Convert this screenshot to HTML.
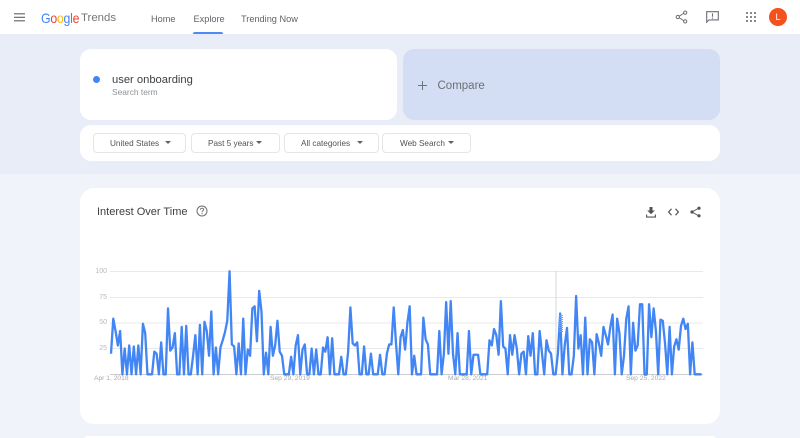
<!DOCTYPE html>
<html lang="en"><head><meta charset="utf-8"><title>Google Trends</title>
<style>
html,body{margin:0;padding:0;width:800px;height:438px;overflow:hidden;background:#f0f4fa;font-family:"Liberation Sans",sans-serif}
#wrap{position:relative;width:800px;height:438px;overflow:hidden;background:#f0f4fa;filter:blur(.3px)}
.a{position:absolute;white-space:nowrap}
#band{left:0;top:34px;width:800px;height:140px;background:#e9edf8}
#head{left:0;top:0;width:800px;height:34px;background:#fff}
.card{position:absolute;background:#fff;border-radius:11px}
.nav{top:12.5px;font-size:9.2px;line-height:12px;color:#5f6368}
.chip{position:absolute;top:133px;height:18px;border:1px solid #e3e5e8;border-radius:4px;background:#fff;font-size:8.2px;line-height:19px;color:#4f5357}
.chip span{position:absolute;top:0;white-space:nowrap}
.chip i{position:absolute;top:7px;width:0;height:0;border-left:3.2px solid transparent;border-right:3.2px solid transparent;border-top:3.6px solid #5f6368}
.y{font-size:7px;line-height:8px;color:#b8babd;text-align:right;width:20px;left:87px}
.x{font-size:6.7px;line-height:8px;color:#a9abae;top:375px}
svg{position:absolute;overflow:visible}
</style></head><body><div id="wrap">
<div class="a" id="band"></div>
<div class="a" id="head"></div>

<svg style="left:14px;top:13px" width="11" height="9" viewBox="0 0 11 9"><path d="M0 .8h11M0 4.3h11M0 7.8h11" stroke="#5f6368" stroke-width="1.1" fill="none"/></svg>
<div class="a" style="left:41px;top:8.5px;font-size:14px;line-height:18px;letter-spacing:-.3px;transform:scaleX(.88);transform-origin:0 50%"><span style="color:#4285f4">G</span><span style="color:#ea4335">o</span><span style="color:#fbbc05">o</span><span style="color:#4285f4">g</span><span style="color:#34a853">l</span><span style="color:#ea4335">e</span></div>
<div class="a" style="left:81px;top:9px;font-size:11.4px;line-height:18px;color:#757575">Trends</div>
<div class="a nav" style="left:151px">Home</div>
<div class="a nav" style="left:193.5px">Explore</div>
<div class="a nav" style="left:241px">Trending Now</div>
<div class="a" style="left:193px;top:32px;width:30px;height:2px;background:#4c8bf5;border-radius:2px 2px 0 0"></div>

<svg style="left:675px;top:10px" width="13" height="14" viewBox="0 0 13 14"><path d="M10 2.5 3 7l7 4.5" stroke="#6b6f73" stroke-width="1" fill="none"/><circle cx="10.2" cy="2.6" r="1.6" fill="#fff" stroke="#6b6f73"/><circle cx="2.8" cy="7" r="1.6" fill="#fff" stroke="#6b6f73"/><circle cx="10.2" cy="11.4" r="1.6" fill="#fff" stroke="#6b6f73"/></svg>
<svg style="left:706px;top:11px" width="13" height="12" viewBox="0 0 13 12"><path d="M.7.7h11.6v8.2H3L.7 11.2z" fill="none" stroke="#6b6f73" stroke-width="1.1"/><path d="M6.5 2.4v3.4M6.5 6.6v1.2" stroke="#6b6f73" stroke-width="1.1"/></svg>
<svg style="left:746px;top:12px" width="10" height="10" viewBox="0 0 10 10" fill="#5f6368"><circle cx="1" cy="1" r="1"/><circle cx="5" cy="1" r="1"/><circle cx="9" cy="1" r="1"/><circle cx="1" cy="5" r="1"/><circle cx="5" cy="5" r="1"/><circle cx="9" cy="5" r="1"/><circle cx="1" cy="9" r="1"/><circle cx="5" cy="9" r="1"/><circle cx="9" cy="9" r="1"/></svg>
<div class="a" style="left:769px;top:8px;width:18px;height:18px;border-radius:50%;background:#f4511e;color:#fff;font-size:9px;line-height:18px;text-align:center">L</div>

<div class="card" style="left:80px;top:49px;width:317px;height:71px"></div>
<div class="card" style="left:403px;top:49px;width:317px;height:71px;background:#d3def5"></div>
<div class="card" style="left:80px;top:125px;width:640px;height:36px"></div>
<div class="a" style="left:93px;top:76px;width:7px;height:7px;border-radius:50%;background:#4285f4"></div>
<div class="a" style="left:112px;top:72.5px;font-size:11.2px;line-height:14px;color:#3c4043">user onboarding</div>
<div class="a" style="left:112px;top:87px;font-size:8.4px;line-height:10px;color:#8f9296">Search term</div>
<svg style="left:418px;top:81px" width="9" height="9" viewBox="0 0 9 9"><path d="M4.5 0v9M0 4.5h9" stroke="#70757a" stroke-width="1"/></svg>
<div class="a" style="left:437.5px;top:78.5px;font-size:11.5px;line-height:15px;color:#6b6f73">Compare</div>

<div class="chip" style="left:93px;width:91px"><span style="left:16px">United States</span><i style="left:71px"></i></div>
<div class="chip" style="left:190.5px;width:87px"><span style="left:16.5px">Past 5 years</span><i style="left:64px"></i></div>
<div class="chip" style="left:283.5px;width:93px"><span style="left:16.5px">All categories</span><i style="left:72px"></i></div>
<div class="chip" style="left:382px;width:87px"><span style="left:17px">Web Search</span><i style="left:65px"></i></div>

<div class="card" style="left:80px;top:188px;width:640px;height:236px;border-radius:14px"></div>
<div class="card" style="left:85px;top:436px;width:630px;height:2px;border-radius:2px 2px 0 0"></div>
<div class="a" style="left:97px;top:204.5px;font-size:11px;line-height:15px;color:#3c4043">Interest Over Time</div>
<svg style="left:196px;top:205px" width="12" height="12" viewBox="0 0 12 12"><circle cx="6" cy="6" r="5" fill="none" stroke="#6b6f73"/><path d="M4.4 4.8C4.4 3.8 5.1 3.2 6 3.2s1.6.6 1.6 1.4C7.600 5.800 6 5.800 6 7.300" fill="none" stroke="#6b6f73" stroke-width=".9"/><circle cx="6" cy="8.700" r=".6" fill="#6b6f73"/></svg>

<svg style="left:646px;top:207px" width="10" height="11" viewBox="0 0 10 11"><path d="M3.500 0h3v3.500h2.300L5 7.200 1.200 3.500h2.300z" fill="#505458"/><path d="M.6 7.500v2.600h8.800V7.500" fill="none" stroke="#505458" stroke-width="1.100"/></svg>
<svg style="left:668px;top:208px" width="11" height="8" viewBox="0 0 11 8"><path d="M3.500.8.600 4l2.900 3.200M7.500.8 10.400 4 7.500 7.200" fill="none" stroke="#505458" stroke-width="1.200"/></svg>
<svg style="left:690px;top:206px" width="11" height="12" viewBox="0 0 11 12"><path d="M9 2 2 6l7 4" stroke="#505458" fill="none"/><circle cx="9" cy="2.200" r="1.600" fill="#505458"/><circle cx="2" cy="6" r="1.600" fill="#505458"/><circle cx="9" cy="9.800" r="1.600" fill="#505458"/></svg>

<svg style="left:0;top:0" width="800" height="438">
<path d="M110 271.500H703M110 297.500H703M110 323H703M110 348.500H703" stroke="#e8e9eb" stroke-width="1" fill="none"/>
<path d="M110 374.500H703" stroke="#c9cbce" stroke-width="1" fill="none"/>
<path d="M556 271V374" stroke="#dcdee0" stroke-width="1.200"/>
<g transform="translate(111,374.300) scale(2.280,-1.030)">
<polyline vector-effect="non-scaling-stroke" fill="none" stroke="#4285f4" stroke-width="2.300" stroke-linejoin="round" points="0,20 1,54 2,42 3,28 4,42 5,0 6,25 7,0 8,28 9,0 10,27 11,0 12,28 13,0 14,49 15,40 16,0 17,0 18,0 19,22 20,20 21,0 22,31 23,0 24,0 25,64 26,23 27,26 28,40 29,0 30,0 31,46 32,0 33,47 34,0 35,0 36,18 37,38 38,0 39,48 40,0 41,51 42,42 43,18 44,61 45,0 46,26 47,0 48,26 49,33 50,41 51,52 52,100 53,29 54,27 55,0 56,30 57,0 58,54 59,0 60,24 61,18 62,64 63,66 64,32 65,81 66,61 67,0 68,21 69,0 70,46 71,18 72,28 73,52 74,22 75,18 76,0 77,0 78,0 79,17 80,0 81,28 82,38 83,0 84,24 85,29 86,0 87,0 88,25 89,0 90,24 91,0 92,0 93,26 94,22 95,36 96,0 97,35 98,0 99,0 100,0 101,17 102,0 103,0 104,22 105,65 106,30 107,28 108,31 109,0 110,0 111,27 112,0 113,0 114,20 115,0 116,0 117,0 118,19 119,0 120,0 121,20 122,29 123,29 124,65 125,30 126,0 127,36 128,43 129,24 130,50 131,66 132,0 133,18 134,0 135,0 136,0 137,55 138,34 139,29 140,0 141,0 142,0 143,0 144,42 145,0 146,20 147,70 148,20 149,71 150,20 151,0 152,40 153,0 154,0 155,0 156,0 157,42 158,0 159,19 160,19 161,19 162,0 163,0 164,0 165,0 166,33 167,28 168,44 169,38 170,19 171,71 172,27 173,25 174,0 175,38 176,19 177,38 178,25 179,0 180,20 181,22 182,0 183,37 184,18 185,40 186,0 187,0 188,42 189,21 190,0 191,33 192,23 193,20 194,0 195,0 196,20 197,59 198,0 199,28 200,45 201,0 202,0 203,18 204,76 205,25 206,38 207,0 208,55 209,0 210,34 211,31 212,0 213,39 214,30 215,18 216,46 217,38 218,29 219,46 220,58 221,0 222,54 223,40 224,0 225,18 226,54 227,66 228,0 229,50 230,23 231,28 232,68 233,68 234,0 235,0 236,68 237,36 238,64 239,42 240,0 241,53 242,52 243,30 244,0 245,46 246,0 247,27 248,34 249,24 250,47 251,54 252,44 253,49 254,0 255,31 256,0 257,0 258,0 259,0"/>
</g>
<path d="M561 315V332" stroke="#9a9ea2" stroke-width="4" stroke-dasharray="1 1" fill="none"/>
</svg>

<div class="a y" style="top:268px">100</div>
<div class="a y" style="top:293.500px">75</div>
<div class="a y" style="top:319px">50</div>
<div class="a y" style="top:344.500px">25</div>
<div class="a x" style="left:94px">Apr 1, 2018</div>
<div class="a x" style="left:270px">Sep 29, 2019</div>
<div class="a x" style="left:448px">Mar 28, 2021</div>
<div class="a x" style="left:626px">Sep 25, 2022</div>
</div></body></html>
